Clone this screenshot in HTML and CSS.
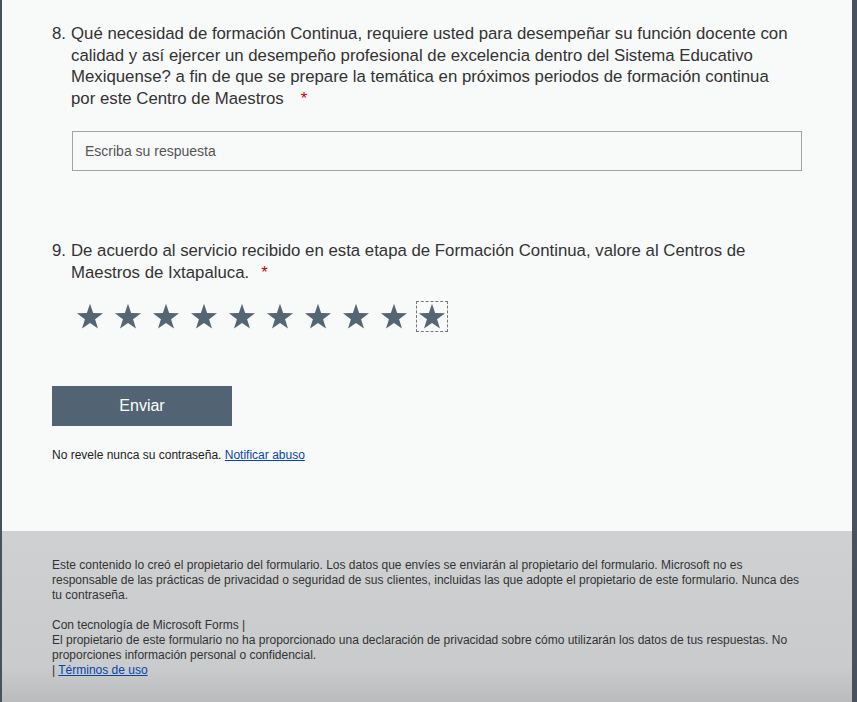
FILE: index.html
```html
<!DOCTYPE html>
<html lang="es">
<head>
    <meta charset="UTF-8">
    <meta name="viewport" content="width=device-width, initial-scale=1.0">
    <title>Formulario</title>
    <link rel="stylesheet" href="styles.css">
</head>
<body>
    <div class="page">
        <div class="card">
            <div class="question">
                <div class="q-title">
                    <span class="q-num">8.</span>
                    <span class="q-text">Qué necesidad de formación Continua, requiere usted para desempeñar su función docente con calidad y así ejercer un desempeño profesional de excelencia dentro del Sistema Educativo Mexiquense? a fin de que se prepare la temática en próximos periodos de formación continua por este Centro de Maestros<span class="req wide">*</span></span>
                </div>
                <input class="answer" type="text" placeholder="Escriba su respuesta">
            </div>

            <div class="question q9">
                <div class="q-title">
                    <span class="q-num">9.</span>
                    <span class="q-text">De acuerdo al servicio recibido en esta etapa de Formación Continua, valore al Centros de Maestros de Ixtapaluca.<span class="req">*</span></span>
                </div>
                <div class="stars" id="stars"></div>
            </div>

            <button class="submit">Enviar</button>
            <p class="note">No revele nunca su contraseña. <a href="#">Notificar abuso</a></p>
        </div>

        <div class="footer">
            <p>Este contenido lo creó el propietario del formulario. Los datos que envíes se enviarán al propietario del formulario. Microsoft no es responsable de las prácticas de privacidad o seguridad de sus clientes, incluidas las que adopte el propietario de este formulario. Nunca des tu contraseña.</p>
            <p>Con tecnología de Microsoft Forms |<br>
            El propietario de este formulario no ha proporcionado una declaración de privacidad sobre cómo utilizarán los datos de tus respuestas. No proporciones información personal o confidencial.<br>
            | <a href="#">Términos de uso</a></p>
        </div>
    </div>

    <script>
        var star = '<svg viewBox="0 0 24 24" width="30" height="29"><polygon points="12,1.5 14.6,9.2 22.8,9.3 16.2,14.2 18.6,22 12,17.3 5.4,22 7.8,14.2 1.2,9.3 9.4,9.2" fill="#546574"/></svg>';
        var box = document.getElementById("stars");
        for (let i = 0; i < 10; i++) {
            let s = document.createElement("span");
            s.className = i === 9 ? "star focused" : "star";
            s.innerHTML = star;
            box.appendChild(s);
        }
    </script>
</body>
</html>
```

FILE: styles.css
```css
body {
    margin: 0;
    font-family: "Liberation Sans", Arial, sans-serif;
    background-color: #46525c;
    color: #333;
}
.page {
    margin: 0 5px 0 2px;
    height: 702px;
    display: flex;
    flex-direction: column;
}
.card {
    background-color: #f8f9f9;
    padding: 23px 50px 0 50px;
    height: 508px;
}
.q-title {
    display: flex;
    font-size: 16.8px;
    line-height: 21.7px;
    color: #333;
}
.q-num {
    width: 19px;
    flex: none;
}
.q-text {
    width: 720px;
}
.req {
    color: #c00;
    margin-left: 12px;
}
.req.wide {
    margin-left: 17px;
}
.answer {
    display: block;
    box-sizing: border-box;
    margin: 21px 0 0 20px;
    width: 730px;
    height: 40px;
    border: 1px solid #a3a3a3;
    background: transparent;
    padding: 0 12px;
    font-family: inherit;
    font-size: 14px;
    color: #333;
}
.answer::placeholder {
    color: #555;
}
.q9 {
    margin-top: 69px;
}
.stars {
    display: flex;
    gap: 8px;
    margin: 19px 0 0 23px;
}
.star {
    width: 30px;
    height: 29px;
    box-sizing: border-box;
    display: flex;
    align-items: center;
    justify-content: center;
}
.star svg {
    display: block;
}
.focused {
    outline: 1px dashed #777;
}
.submit {
    display: block;
    margin-top: 55px;
    width: 180px;
    height: 40px;
    border: none;
    background-color: #526473;
    color: #fff;
    font-family: inherit;
    font-size: 16px;
}
.note {
    margin: 22px 0 0;
    font-size: 12px;
    color: #222;
}
a {
    color: #0645ad;
}
.footer {
    flex: 1;
    background: linear-gradient(#ced0d2, #c9cbcd 80%, #b9bbbd);
    padding: 27px 50px 0;
    font-size: 12px;
    line-height: 15px;
    color: #333;
}
.footer p {
    margin: 0 0 15px;
}
```
